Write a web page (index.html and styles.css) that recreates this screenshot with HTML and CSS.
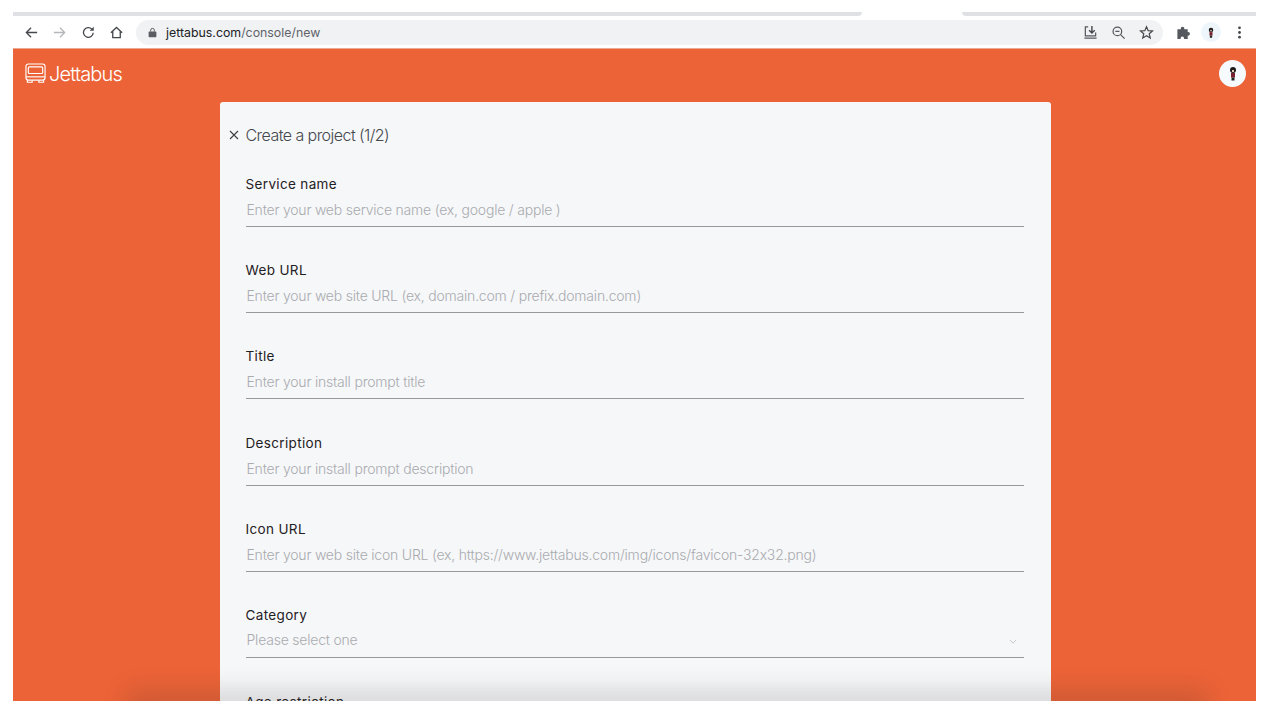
FILE: index.html
```html
<!DOCTYPE html>
<html lang="en">
<head>
<meta charset="utf-8">
<title>Jettabus</title>
<link rel="stylesheet" href="styles.css">
</head>
<body>
<div class="window">
  <div class="tabstrip">
    <div class="tabline tabline-left"></div>
    <div class="tabgap"></div>
    <div class="tabline tabline-right"></div>
  </div>
  <div class="toolbar">
    <div class="nav">
      <svg class="tb-icon" viewBox="0 0 16 16"><path d="M14 8H2.500M7.500 3 2.500 8l5 5" fill="none" stroke="#45484c" stroke-width="1.400"/></svg>
      <svg class="tb-icon" viewBox="0 0 16 16"><path d="M2 8h11.500M8.500 3l5 5-5 5" fill="none" stroke="#b4b6b9" stroke-width="1.400"/></svg>
      <svg class="tb-icon" viewBox="0 0 16 16"><path d="M13 8.200A5.200 5.200 0 1 1 11.600 4.400" fill="none" stroke="#45484c" stroke-width="1.400"/><path d="M13.600 1.800v4.400H9.200z" fill="#45484c"/></svg>
      <svg class="tb-icon" viewBox="0 0 16 16"><path d="M2 8.200 8 2.600l6 5.600M4 7v6.500h8V7" fill="none" stroke="#45484c" stroke-width="1.400"/></svg>
    </div>
    <div class="omnibox">
      <svg class="lock" viewBox="0 0 10 12"><path d="M1.500 5h7a.8.8 0 0 1 .8.8v4.600a.8.8 0 0 1-.8.8h-7a.8.8 0 0 1-.8-.8V5.800a.8.8 0 0 1 .8-.8z" fill="#5a5d61"/><path d="M3 5V3.400a2 2 0 0 1 4 0V5" fill="none" stroke="#5a5d61" stroke-width="1.100"/></svg>
      <div class="url"><span class="host">jettabus.com</span>/console/new</div>
      <div class="omni-actions">
        <svg class="tb-icon" viewBox="0 0 16 16"><path d="M5.500 2H2.500v9.500h11V8M1.500 14h13" fill="none" stroke="#55585c" stroke-width="1.300"/><path d="M9.500 1v7.500M6.500 5.600l3 3 3-3" fill="none" stroke="#45484c" stroke-width="1.500"/></svg>
        <svg class="tb-icon" viewBox="0 0 16 16"><circle cx="6.800" cy="6.800" r="4.600" fill="none" stroke="#55585c" stroke-width="1.300"/><path d="m10.200 10.200 4.300 4.300M4.600 6.800h4.400" fill="none" stroke="#55585c" stroke-width="1.300"/></svg>
        <svg class="tb-icon" viewBox="0 0 16 16"><path d="m8 1.800 1.800 4.200 4.600.4-3.500 3 1.100 4.500L8 11.500l-4 2.400 1.100-4.500-3.500-3 4.600-.4z" fill="none" stroke="#45484c" stroke-width="1.300"/></svg>
      </div>
    </div>
    <div class="ext">
      <svg class="tb-icon" viewBox="0 0 16 16"><path d="M1.500 4.500h3.700a1.900 1.900 0 1 1 3.600 0h3.700v3.100a1.900 1.900 0 1 1 0 3.700V15H8.500a1.900 1.900 0 1 0-3.500 0H1.500z" fill="#55585c"/></svg>
      <div class="mini-avatar">
        <svg class="fig-small" viewBox="0 0 8 14"><circle cx="4" cy="3.500" r="3" fill="#1d1a1c"/><rect x="3" y="3.500" width="2" height="2" fill="#e8c9b4"/><rect x="2" y="6.500" width="4" height="4.500" fill="#7a1f2b"/><rect x="2.500" y="11" width="3" height="3" fill="#222"/></svg>
      </div>
      <svg class="tb-icon" viewBox="0 0 16 16"><circle cx="8" cy="3" r="1.500" fill="#45484c"/><circle cx="8" cy="8" r="1.500" fill="#45484c"/><circle cx="8" cy="13" r="1.500" fill="#45484c"/></svg>
    </div>
  </div>
  <div class="app">
    <header class="appbar">
      <div class="brand">
        <svg class="bus" viewBox="0 0 22 22"><rect x="1" y="1" width="20" height="17" rx="2.500" fill="none" stroke="#fff" stroke-width="1.200"/><rect x="3.500" y="4" width="15" height="7" rx="1" fill="none" stroke="#fff" stroke-width="1.200"/><path d="M1 14.500h20" stroke="#fff" stroke-width="1.200"/><path d="M2.500 18v2.200h5V18M14.500 18v2.200h5V18" fill="none" stroke="#fff" stroke-width="1.200"/></svg>
        <span class="brand-name">Jettabus</span>
      </div>
      <div class="user-avatar">
        <svg class="fig-large" viewBox="0 0 8 14"><circle cx="4" cy="3.500" r="3" fill="#1d1a1c"/><rect x="3" y="3.500" width="2" height="2" fill="#e8c9b4"/><rect x="2" y="6.500" width="4" height="4.500" fill="#7a1f2b"/><rect x="2.500" y="11" width="3" height="3" fill="#222"/></svg>
      </div>
    </header>
    <main class="card">
      <div class="card-head">
        <svg class="close" viewBox="0 0 10 10"><path d="m1 1 8 8M9 1 1 9" stroke="#3c3f43" stroke-width="1.100" fill="none"/></svg>
        <h1 class="card-title">Create a project (1/2)</h1>
      </div>
      <form class="form">
        <div class="field">
          <div class="label">Service name</div>
          <div class="control">Enter your web service name (ex, google / apple )</div>
        </div>
        <div class="field">
          <div class="label">Web URL</div>
          <div class="control">Enter your web site URL (ex, domain.com / prefix.domain.com)</div>
        </div>
        <div class="field">
          <div class="label">Title</div>
          <div class="control">Enter your install prompt title</div>
        </div>
        <div class="field">
          <div class="label">Description</div>
          <div class="control">Enter your install prompt description</div>
        </div>
        <div class="field">
          <div class="label">Icon URL</div>
          <div class="control">Enter your web site icon URL (ex, https://www.jettabus.com/img/icons/favicon-32x32.png)</div>
        </div>
        <div class="field">
          <div class="label">Category</div>
          <div class="control control-select">
            <span>Please select one</span>
            <svg class="chevron" viewBox="0 0 10 6"><path d="m1 1 4 4 4-4" fill="none" stroke="#b9bbbf" stroke-width="1"/></svg>
          </div>
        </div>
        <div class="field">
          <div class="label">Age restriction</div>
        </div>
      </form>
    </main>
    <div class="bottom-shade"></div>
  </div>
</div>
</body>
</html>
```

FILE: styles.css
```css
* { box-sizing: border-box; }
html, body { margin: 0; height: 715px; background: #fff; overflow: hidden; }
body { padding: 12px 24px 14px 13px; font-family: "Inter", "Liberation Sans", sans-serif; font-feature-settings: "calt" 0; }
.window { height: 689px; display: flex; flex-direction: column; overflow: hidden; }

.tabstrip { display: flex; height: 4px; flex: none; }
.tabline { background: #dfe1e5; }
.tabline-left { width: 849px; border-bottom-right-radius: 4px; }
.tabgap { width: 100px; background: #fff; }
.tabline-right { flex: 1; border-bottom-left-radius: 4px; }

.toolbar { height: 33px; flex: none; display: flex; align-items: center; background: #fff; border-bottom: 1px solid #eba98f; }
.nav { display: flex; align-items: center; gap: 13.300px; width: 123px; padding-left: 11px; flex: none; }
.tb-icon { width: 15px; height: 15px; display: block; flex: none; }
.omnibox { width: 1027px; height: 25px; flex: none; background: #f0f2f4; border-radius: 13px; display: flex; align-items: center; padding-left: 12px; }
.lock { width: 9px; height: 11px; flex: none; }
.url { margin-left: 9px; font-size: 12.350px; color: #5f6368; flex: 1; white-space: nowrap; }
.host { color: #202124; }
.omni-actions { display: flex; align-items: center; gap: 13px; padding-right: 9px; }
.ext { flex: 1; display: flex; align-items: center; padding-left: 13px; gap: 10px; }
.mini-avatar { width: 20px; height: 20px; border-radius: 50%; background: #eef6fb; display: flex; align-items: center; justify-content: center; flex: none; margin-right: 1px; }
.fig-small { width: 6px; height: 11px; }

.app { flex: 1; min-height: 0; background: #ec6337; position: relative; overflow: hidden; display: flex; flex-direction: column; align-items: center; }
.appbar { width: 100%; height: 53px; flex: none; display: flex; align-items: center; justify-content: space-between; padding: 0 10px 4px 12px; }
.brand { display: flex; align-items: center; gap: 3px; color: #fff; }
.bus { width: 21px; height: 21px; display: block; }
.brand-name { font-size: 20px; font-weight: 300; letter-spacing: -0.850px; }
.user-avatar { width: 27px; height: 27px; border-radius: 50%; background: #f6fafc; display: flex; align-items: center; justify-content: center; }
.fig-large { width: 8px; height: 15px; }

.card { width: 831px; flex: none; margin-left: 1px; background: #f6f7f9; border-radius: 3px; padding: 0 27px 0 26px; }
.card-head { height: 73.800px; display: flex; align-items: center; position: relative; padding-bottom: 8px; }
.close { width: 10px; height: 10px; position: absolute; left: -17px; top: 28px; }
.card-title { margin: 0; font-size: 16px; font-weight: 300; color: #45484d; letter-spacing: -0.550px; }
.form { display: flex; flex-direction: column; }
.field { height: 86.300px; flex: none; }
.label { font-size: 13.500px; line-height: 16px; color: #1f2023; height: 16px; letter-spacing: 0.350px; }
.control { height: 35px; padding: 9px 0 0 1px; line-height: 18px; font-size: 14px; font-weight: 300; color: #a9abaf; letter-spacing: -0.210px; border-bottom: 1px solid #97999c; white-space: nowrap; }
.control-select { display: flex; justify-content: space-between; align-items: flex-start; padding-top: 8px; padding-right: 7px; }
.chevron { width: 8px; height: 5px; margin-top: 8px; }

.bottom-shade { position: absolute; left: 120px; right: 55px; bottom: -16px; height: 16px; box-shadow: 0 -4px 24px 6px rgba(50, 40, 40, 0.170); pointer-events: none; }
```
